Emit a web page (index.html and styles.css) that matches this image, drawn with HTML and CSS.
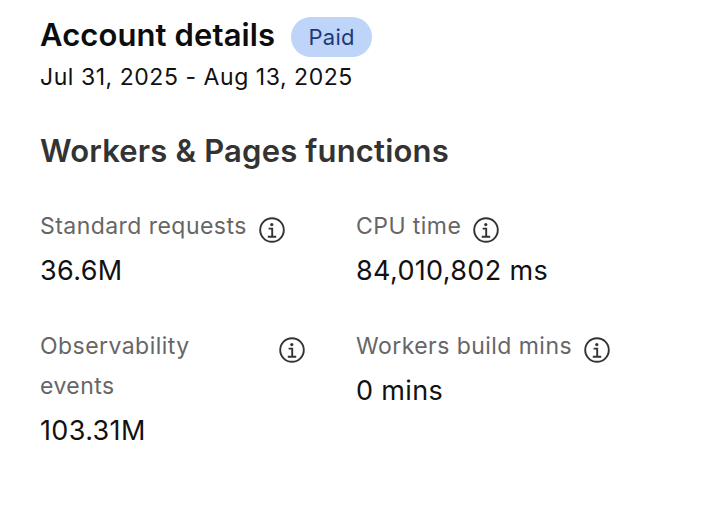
FILE: index.html
```html
<!DOCTYPE html>
<html lang="en">
<head>
<meta charset="utf-8">
<title>Account details</title>
<link rel="stylesheet" href="styles.css">
</head>
<body>
<main class="page">
  <header class="head">
    <div class="title-row">
      <h1 class="title">Account details</h1>
      <span class="badge">Paid</span>
    </div>
    <p class="range">Jul 31, 2025 - Aug 13, 2025</p>
  </header>
  <h2 class="section">Workers &amp; Pages functions</h2>
  <div class="grid">
    <div class="metric">
      <div class="label"><span class="label-text">Standard requests</span><svg class="info" viewBox="0 0 26 26"><circle cx="13" cy="13" r="11.8"/><circle class="dot" cx="12.8" cy="7.6" r="1.6"/><path d="M9.6 11.6h3.6v8M8.8 19.8h8.4"/></svg></div>
      <div class="value">36.6M</div>
    </div>
    <div class="metric">
      <div class="label"><span class="label-text">CPU time</span><svg class="info" viewBox="0 0 26 26"><circle cx="13" cy="13" r="11.8"/><circle class="dot" cx="12.8" cy="7.6" r="1.6"/><path d="M9.6 11.6h3.6v8M8.8 19.8h8.4"/></svg></div>
      <div class="value">84,010,802 ms</div>
    </div>
    <div class="metric">
      <div class="label label-wide"><span class="label-text">Observability events</span><svg class="info" viewBox="0 0 26 26"><circle cx="13" cy="13" r="11.8"/><circle class="dot" cx="12.8" cy="7.6" r="1.6"/><path d="M9.6 11.6h3.6v8M8.8 19.8h8.4"/></svg></div>
      <div class="value">103.31M</div>
    </div>
    <div class="metric">
      <div class="label"><span class="label-text">Workers build mins</span><svg class="info" viewBox="0 0 26 26"><circle cx="13" cy="13" r="11.8"/><circle class="dot" cx="12.8" cy="7.6" r="1.6"/><path d="M9.6 11.6h3.6v8M8.8 19.8h8.4"/></svg></div>
      <div class="value">0 mins</div>
    </div>
  </div>
</main>
</body>
</html>
```
FILE: styles.css
```css
* { box-sizing: border-box; }
html, body { margin: 0; background: #fff; }
body { font-family: Inter, "Liberation Sans", sans-serif; color: #111; }
.page { width: 712px; height: 518px; padding: 17px 0 0 40px; overflow: hidden; }
.title-row { display: flex; align-items: flex-start; gap: 16px; height: 40px; }
.title { margin: 0; font-size: 31px; font-weight: 600; line-height: 36px; color: #0d0d0d; letter-spacing: 0.1px; }
.badge { display: flex; align-items: center; justify-content: center; width: 81px; height: 40px; border-radius: 20px; background: #bfd4f9; color: #1d3a78; font-size: 22px; letter-spacing: 0.3px; }
.range { margin: 4px 0 0; font-size: 23px; line-height: 32px; letter-spacing: 0.54px; color: #111; }
.section { margin: 40px 0 0; font-size: 31px; font-weight: 600; line-height: 36px; color: #333; letter-spacing: 0.17px; }
.grid { display: grid; grid-template-columns: 316px 300px; row-gap: 33px; margin-top: 37px; }
.metric { display: flex; flex-direction: column; }
.label { display: flex; align-items: flex-start; gap: 12px; font-size: 23px; line-height: 40px; color: #666; width: 265px; min-height: 40px; }
.label-text { letter-spacing: 0.45px; }
.label-wide { justify-content: space-between; }
.label-wide .label-text { width: 170px; }
.info { width: 26px; height: 26px; margin-top: 11px; flex: none; fill: none; stroke: #333; stroke-width: 1.9; }
.info .dot { fill: #333; stroke: none; }
.value { margin-top: 2px; font-size: 27px; line-height: 45px; letter-spacing: 0.35px; color: #111; }
```
